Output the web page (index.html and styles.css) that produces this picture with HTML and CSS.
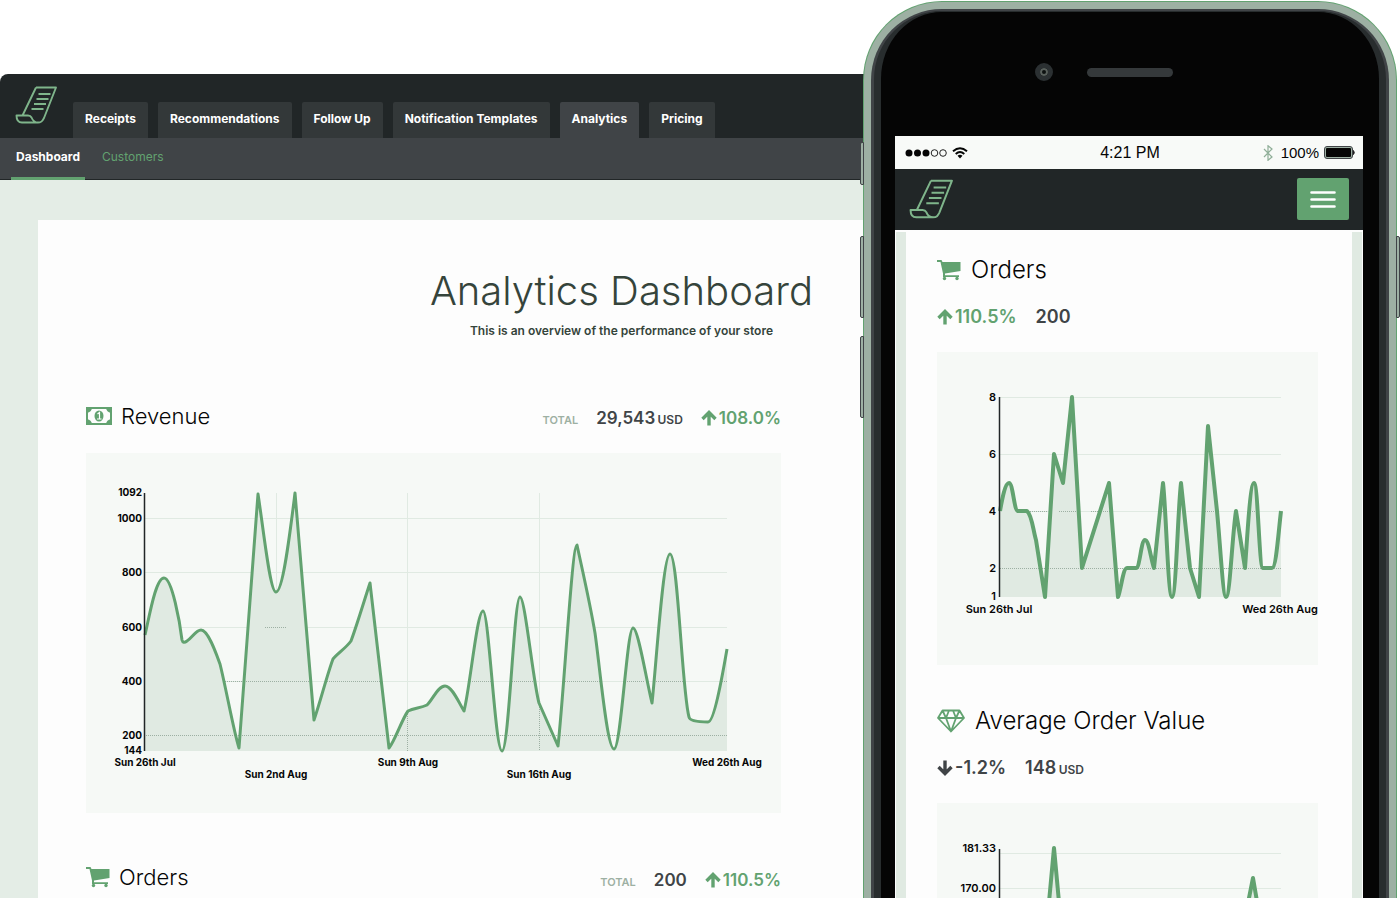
FILE: index.html
```html
<!DOCTYPE html>
<html lang="en">
<head>
<meta charset="utf-8">
<title>Analytics Dashboard</title>
<link rel="stylesheet" href="styles.css">
</head>
<body>
<svg class="sprite" aria-hidden="true">
  <symbol id="receipt" viewBox="0 0 42 38">
    <path d="M21 1.500H41L29 32C27.500 35 26.500 36.500 23 36.500C19 36.500 17.500 34 16.500 31.500Q15.500 29.500 13 29.500H1.500C1.500 34 3 36.500 7 36.500H23M21 1.500L7.500 29.500M23.500 8H35.500M21.500 13H33.500M19 18H31M16.500 23H28.500" fill="none" stroke="#7fb58b" stroke-width="1.900" stroke-linejoin="round"/>
  </symbol>
  <symbol id="cart" viewBox="0 0 24 22">
    <path d="M0 1H4.500L5.500 3H23.500V12L8 14.500V16.200H22V18H6V14.500L3.500 3H0Z" fill="#62a270"/>
    <circle cx="7.500" cy="19.500" r="1.700" fill="#62a270"/><circle cx="20" cy="19.500" r="1.700" fill="#62a270"/>
  </symbol>
  <symbol id="up" viewBox="0 0 16 16">
    <path d="M8 15.500V3M1.500 9L8 2.500L14.500 9" fill="none" stroke="currentColor" stroke-width="3.400"/>
  </symbol>
</svg>
<main class="stage">
  <section class="desktop">
    <header class="topbar">
      <svg class="logo" role="img" aria-label="Receipts logo"><use href="#receipt"/></svg>
      <nav class="tabs">
        <a href="#">Receipts</a><a href="#">Recommendations</a><a href="#">Follow Up</a><a href="#">Notification Templates</a><a href="#" class="active">Analytics</a><a href="#">Pricing</a>
      </nav>
    </header>
    <nav class="subnav"><a href="#" class="active">Dashboard</a><a href="#">Customers</a></nav>
    <div class="page">
      <div class="card">
        <div class="intro">
          <h1>Analytics Dashboard</h1>
          <p>This is an overview of the performance of your store</p>
        </div>
        <section class="report">
          <div class="report-head">
            <svg class="icon-note" viewBox="0 0 26 18" aria-hidden="true">
              <rect x="1" y="1" width="24" height="16" fill="none" stroke="#62a270" stroke-width="2"/>
              <path d="M1 1H6Q5.500 5 1 6ZM25 1H20Q20.500 5 25 6ZM1 17H6Q5.500 13 1 12ZM25 17H20Q20.500 13 25 12Z" fill="#62a270"/>
              <ellipse cx="13" cy="9" rx="4.500" ry="5.500" fill="#62a270"/>
              <path d="M11.500 7L13.500 5.500V12M11 12H15.500" fill="none" stroke="#fff" stroke-width="1.200"/>
            </svg>
            <h2>Revenue</h2>
            <div class="stats">
              <span class="total">TOTAL</span>
              <span class="amount">29,543 <small>USD</small></span>
              <span class="rise"><svg class="arrow"><use href="#up"/></svg>108.0%</span>
            </div>
          </div>
          <svg class="chart" viewBox="0 0 695 360" role="img" aria-label="Revenue by day">
            <path class="grid" d="M59 65.500H641M59 119.500H641M59 174.500H641M59 228.500H641M59 282.500H641M190.500 40V298M321.500 40V298M453.500 40V298"/>
            <path class="area" d="M59 182C64 160 70 125 78 125C86 125 94 170 96 187Q97 191 101 188C106 185 110 177 115 177C122 177 130 200 134 211C140 235 148 280 153 295L172 41C178 80 184 139 190 139C197 139 204 80 209 40L228 267C234 250 241 222 247 206C252 200 260 195 265 188C271 172 279 145 284 130L303 295C309 288 316 266 322 258C328 255 335 255 341 252C347 246 352 233 359 233C366 233 373 250 378 258C384 235 391 158 397 158C403 158 409 298 416 298C423 298 428 144 434 144C439 144 447 228 453 250L472 293C478 240 486 92 491 92C497 120 504 150 509 180C514 215 521 296 528 296C535 296 541 175 547 175C552 175 560 225 566 250C570 215 577 101 584 101C592 101 596 240 603 264Q604 269 622 269C628 269 636 225 641 196V298H59Z"/>
            <path class="dots" d="M179 174.500H201M137 228.500H158M160 228.500H223M241 228.500H295M384 228.500H407M424 228.500H447M479 228.500H516M537 228.500H559M570 228.500H598M634 228.500H641M60 282.500H641M321.500 259V298M453.500 252V298"/>
            <path class="line" d="M59 182C64 160 70 125 78 125C86 125 94 170 96 187Q97 191 101 188C106 185 110 177 115 177C122 177 130 200 134 211C140 235 148 280 153 295L172 41C178 80 184 139 190 139C197 139 204 80 209 40L228 267C234 250 241 222 247 206C252 200 260 195 265 188C271 172 279 145 284 130L303 295C309 288 316 266 322 258C328 255 335 255 341 252C347 246 352 233 359 233C366 233 373 250 378 258C384 235 391 158 397 158C403 158 409 298 416 298C423 298 428 144 434 144C439 144 447 228 453 250L472 293C478 240 486 92 491 92C497 120 504 150 509 180C514 215 521 296 528 296C535 296 541 175 547 175C552 175 560 225 566 250C570 215 577 101 584 101C592 101 596 240 603 264Q604 269 622 269C628 269 636 225 641 196"/>
            <path class="axis" d="M58.500 40V298"/>
            <g class="ylabels"><text x="56" y="43">1092</text><text x="56" y="69">1000</text><text x="56" y="123">800</text><text x="56" y="178">600</text><text x="56" y="232">400</text><text x="56" y="286">200</text><text x="56" y="301">144</text></g>
            <g class="xlabels"><text x="59" y="313">Sun 26th Jul</text><text x="190" y="325">Sun 2nd Aug</text><text x="322" y="313">Sun 9th Aug</text><text x="453" y="325">Sun 16th Aug</text><text x="641" y="313">Wed 26th Aug</text></g>
          </svg>
        </section>
        <section class="report">
          <div class="report-head">
            <svg class="icon-cart"><use href="#cart"/></svg>
            <h2>Orders</h2>
            <div class="stats">
              <span class="total">TOTAL</span>
              <span class="amount">200</span>
              <span class="rise"><svg class="arrow"><use href="#up"/></svg>110.5%</span>
            </div>
          </div>
        </section>
      </div>
    </div>
  </section>

  <section class="phone">
    <i class="side mute"></i><i class="side vol-up"></i><i class="side vol-down"></i><i class="side power"></i>
    <div class="bezel">
      <div class="phone-top"><span class="camera"></span><span class="speaker"></span></div>
      <div class="screen">
        <div class="status">
          <div class="signal">
            <svg class="bars" viewBox="0 0 42 10" aria-hidden="true"><g fill="#050505"><circle cx="4" cy="5" r="3.500"/><circle cx="12.500" cy="5" r="3.500"/><circle cx="21" cy="5" r="3.500"/></g><g fill="none" stroke="#222"><circle cx="29.500" cy="5" r="3.300"/><circle cx="38" cy="5" r="3.300"/></g></svg>
            <svg class="wifi" viewBox="0 0 16 12" aria-hidden="true"><path d="M1 4.300Q8 -1.800 15 4.300M3.700 7Q8 3.200 12.300 7" fill="none" stroke="#050505" stroke-width="1.900"/><path d="M5.500 8.800Q8 6.800 10.500 8.800L8 11.500Z" fill="#050505"/></svg>
          </div>
          <time>4:21 PM</time>
          <div class="power-info">
            <svg class="bluetooth" viewBox="0 0 10 16" aria-hidden="true"><path d="M1 4L9 12L5 15.300V.700L9 4L1 12" fill="none" stroke="#8fae98" stroke-width="1.200"/></svg>
            <span>100%</span>
            <svg class="battery" viewBox="0 0 31 13" aria-hidden="true"><rect x=".500" y=".500" width="28" height="12" rx="2.500" fill="#9db0a3" stroke="#404447"/><rect x="2" y="2" width="25" height="9" rx="1" fill="#050505"/><path d="M29.500 4.500Q31 6.500 29.500 8.500Z" fill="#222" stroke="#222"/></svg>
          </div>
        </div>
        <header class="app-bar">
          <svg class="logo" role="img" aria-label="Receipts logo"><use href="#receipt"/></svg>
          <button type="button" aria-label="Menu"><svg viewBox="0 0 26 18"><path d="M1.500 2.500H24.500M1.500 9.500H24.500M1.500 16.500H24.500" stroke="#fff" stroke-width="2.600" stroke-linecap="round"/></svg></button>
        </header>
        <div class="app-body">
          <section class="mobile-report">
            <div class="mobile-head"><svg class="icon-cart"><use href="#cart"/></svg><h2>Orders</h2></div>
            <div class="mobile-stats"><span class="rise"><svg class="arrow"><use href="#up"/></svg>110.5%</span><span class="amount">200</span></div>
            <svg class="chart thick" viewBox="0 0 381 313" role="img" aria-label="Orders by day">
              <path class="grid" d="M63 45.500H344M63 102.500H344M63 159.500H344M63 216.500H344"/>
              <path class="area" d="M63 159C65 148 68 131 72 131C76 131 77 159 81 159H90C95 163 96 178 99 188L108 245L117 102L126 131L135 45L145 216L172 131L181 245C184 238 186 216 190 216H199C203 216 204 188 208 188C212 188 214 208 217 216L226 131C229 155 231 245 235 245C239 245 241 155 244 131L253 216L262 245L271 74L280 159C283 190 286 245 289 245C293 245 295 185 299 159L308 216C310 190 313 131 317 131C321 131 322 216 326 216H335C339 216 341 185 344 159V245H63Z"/>
              <path class="dots" d="M91 159.500H111M122 159.500H139M154 159.500H174M223 159.500H229M241 159.500H247M266 159.500H280M313 159.500H321M63 216.500H344"/>
              <path class="line" d="M63 159C65 148 68 131 72 131C76 131 77 159 81 159H90C95 163 96 178 99 188L108 245L117 102L126 131L135 45L145 216L172 131L181 245C184 238 186 216 190 216H199C203 216 204 188 208 188C212 188 214 208 217 216L226 131C229 155 231 245 235 245C239 245 241 155 244 131L253 216L262 245L271 74L280 159C283 190 286 245 289 245C293 245 295 185 299 159L308 216C310 190 313 131 317 131C321 131 322 216 326 216H335C339 216 341 185 344 159"/>
              <path class="axis" d="M62.500 45V245"/>
              <g class="ylabels"><text x="59" y="49">8</text><text x="59" y="106">6</text><text x="59" y="163">4</text><text x="59" y="220">2</text><text x="59" y="248">1</text></g>
              <g class="xlabels"><text x="62" y="261">Sun 26th Jul</text><text x="343" y="261">Wed 26th Aug</text></g>
            </svg>
          </section>
          <section class="mobile-report">
            <div class="mobile-head">
              <svg class="icon-gem" viewBox="0 0 28 24" aria-hidden="true"><path d="M5.500 1.500H22.500L27 9L14 22.500L1 9ZM1 9H27M5.500 1.500L9 9L14 22.500L19 9L22.500 1.500M9 9L12 1.500M19 9L16 1.500" fill="none" stroke="#62a270" stroke-width="1.800" stroke-linejoin="round"/></svg>
              <h2>Average Order Value</h2>
            </div>
            <div class="mobile-stats"><span class="fall"><svg class="arrow down"><use href="#up"/></svg>-1.2%</span><span class="amount">148 <small>USD</small></span></div>
            <svg class="chart thick" viewBox="0 0 381 313" role="img" aria-label="Average order value by day">
              <path class="grid" d="M63 50.500H344M63 85.500H344"/>
              <path class="area" d="M111 110L117 45L123 110ZM309 110L316 75L322 110Z"/>
              <path class="line" d="M111 110L117 45L123 110M309 110L316 75L322 110"/>
              <path class="axis" d="M62.500 46V245"/>
              <g class="ylabels"><text x="59" y="49">181.33</text><text x="59" y="89">170.00</text></g>
            </svg>
          </section>
        </div>
      </div>
    </div>
  </section>
</main>
</body>
</html>
```
FILE: styles.css
```css
* { box-sizing: border-box; }

body {
  margin: 0;
  background: #fff;
  color: #050505;
  font-family: Inter, "Open Sans", sans-serif;
  font-size: 12px;
  line-height: 16px;
}

h1, h2, p { margin: 0; font-weight: 300; }
a { text-decoration: none; }
.sprite { position: absolute; width: 0; height: 0; }

.stage {
  display: flex;
  align-items: stretch;
  height: 100vh;
  overflow: hidden;
  padding-right: 4px;
}

/* Desktop window */
.desktop {
  flex: 1;
  min-width: 0;
  margin-top: 74px;
  display: flex;
  flex-direction: column;
}

.topbar {
  display: flex;
  align-items: flex-end;
  gap: 16px;
  height: 64px;
  padding-left: 15px;
  background: #212627;
  border-radius: 8px 0 0 0;
}
.topbar .logo { flex: none; width: 42px; height: 38px; margin-bottom: 14px; }

.tabs { display: flex; gap: 10px; }
.tabs a {
  height: 36px;
  padding: 9px 12px 0;
  border-radius: 2px 2px 0 0;
  background: #333839;
  color: #fff;
  font-weight: 700;
  white-space: nowrap;
}
.tabs .active { background: #404447; }

.subnav {
  display: flex;
  gap: 12px;
  height: 42px;
  padding-left: 11px;
  background: #404447;
  border-bottom: 1px solid #212627;
}
.subnav a {
  height: 42px;
  padding: 11px 5px 0;
  color: #62a270;
}
.subnav .active { color: #fff; font-weight: 700; border-bottom: 3px solid #62a270; }

.page {
  flex: 1;
  min-height: 0;
  padding: 40px 0 0 38px;
  background: #e4ede6;
}
.card {
  display: flex;
  flex-direction: column;
  height: 100%;
  padding: 46px 83px 0 48px;
  overflow: hidden;
  background: #fdfdfd;
}
.intro {
  align-self: flex-end;
  margin-right: -32px;
  margin-bottom: 59px;
  text-align: center;
  color: #35443b;
}
.intro h1 { font-size: 40px; line-height: 50px; white-space: nowrap; }
.intro p { margin-top: 7px; font-weight: 600; }

.report { margin-bottom: 46px; }
.report-head {
  display: flex;
  align-items: center;
  height: 36px;
  margin-bottom: 19px;
}
.report-head h2 { margin-left: 9px; font-size: 22px; line-height: 32px; }
.icon-note { width: 26px; height: 18px; }
.icon-cart { width: 24px; height: 22px; }
.icon-gem { width: 28px; height: 24px; }

.stats { display: flex; align-items: baseline; gap: 18px; margin: 6px 0 0 auto; }
.total { color: #9db0a3; font-size: 11px; font-weight: 600; }
.amount, .rise, .fall { font-size: 17px; line-height: 24px; font-weight: 600; color: #404447; }
.amount small { margin-left: -2px; font-size: 12px; }
.rise { color: #62a270; }
.arrow { width: 16px; height: 16px; margin-right: 2px; vertical-align: -2px; }
.down { transform: rotate(180deg); }

/* Charts */
.chart { display: block; width: 100%; height: auto; background: #f6f9f6; }
.grid { fill: none; stroke: #e0eae2; }
.area { fill: #e0eae2; }
.dots { fill: none; stroke: #9db0a3; stroke-dasharray: 1 1; }
.line { fill: none; stroke: #62a270; stroke-width: 3px; stroke-linejoin: round; }
.thick .line { stroke-width: 4px; }
.axis { fill: none; stroke: #212627; stroke-width: 1.500px; }
.ylabels, .xlabels { font-size: 10px; font-weight: 700; fill: #050505; }
.thick .ylabels, .thick .xlabels { font-size: 11px; font-weight: 600; }
.ylabels { text-anchor: end; }
.xlabels { text-anchor: middle; }

/* Phone */
.phone {
  position: relative;
  flex: none;
  width: 532px;
  margin-top: 2px;
  border: 7px solid #9db0a3;
  border-bottom: 0;
  border-radius: 78px 78px 0 0;
  background: #404447;
  box-shadow: 0 0 0 1px #62a270;
  padding: 2px 3px 0;
}
.bezel {
  display: flex;
  flex-direction: column;
  height: 100%;
  padding: 0 16px 0 14px;
  border: solid #282d2e;
  border-width: 1px 7px 0;
  border-radius: 68px 68px 0 0;
  background: #050505;
}
.phone-top {
  flex: none;
  display: flex;
  align-items: center;
  justify-content: center;
  gap: 34px;
  height: 124px;
  padding: 0 50px 4px 0;
}
.camera {
  width: 18px;
  height: 18px;
  border: 5px solid #2b3032;
  border-radius: 50%;
  background: #0d1110;
  box-shadow: inset 0 0 0 2px #59605c;
}
.speaker { width: 86px; height: 9px; border-radius: 5px; background: #35393b; }

.side {
  position: absolute;
  left: -11px;
  width: 4px;
  height: 82px;
  border: 1px solid #404447;
  border-radius: 2px 0 0 2px;
  background: #9db0a3;
}
.mute { top: 133px; height: 43px; }
.vol-up { top: 227px; }
.vol-down { top: 327px; }
.power { top: 227px; left: auto; right: -11px; border-radius: 0 2px 2px 0; }

.screen { flex: 1; min-height: 0; display: flex; flex-direction: column; background: #fdfdfd; }
.status {
  flex: none;
  display: grid;
  grid-template-columns: 1fr auto 1fr;
  align-items: center;
  height: 33px;
  padding: 0 8px 0 10px;
  background: #f8faf8;
  font-family: "Liberation Sans", sans-serif;
  font-size: 15px;
}
.status time { font-size: 16px; }
.signal, .power-info { display: flex; align-items: center; gap: 5px; }
.power-info { justify-content: flex-end; }
.bars { width: 42px; height: 10px; }
.wifi { width: 16px; height: 12px; }
.bluetooth { width: 10px; height: 16px; margin-right: 3px; }
.battery { width: 31px; height: 13px; }

.app-bar {
  flex: none;
  display: flex;
  align-items: center;
  justify-content: space-between;
  height: 61px;
  padding: 0 14px 2px;
  background: #212627;
}
.app-bar .logo { width: 44px; height: 40px; }
.app-bar button {
  display: grid;
  place-items: center;
  width: 52px;
  height: 42px;
  padding: 0;
  border: 0;
  border-radius: 2px;
  background: #62a270;
}
.app-bar button svg { width: 26px; height: 18px; }

.app-body {
  flex: 1;
  min-height: 0;
  overflow: hidden;
  margin: 2px 1px 0;
  padding: 19px 34px 0 31px;
  border: solid #e0eae2;
  border-width: 0 10px;
}
.mobile-report { margin-bottom: 37px; }
.mobile-head { display: flex; align-items: center; gap: 10px; height: 38px; }
.mobile-head h2 { font-size: 24px; line-height: 36px; }
.mobile-stats { display: flex; align-items: baseline; gap: 19px; height: 24px; margin: 16px 0 23px; white-space: nowrap; }
.mobile-stats .amount, .mobile-stats .rise, .mobile-stats .fall { font-size: 18px; }
```
